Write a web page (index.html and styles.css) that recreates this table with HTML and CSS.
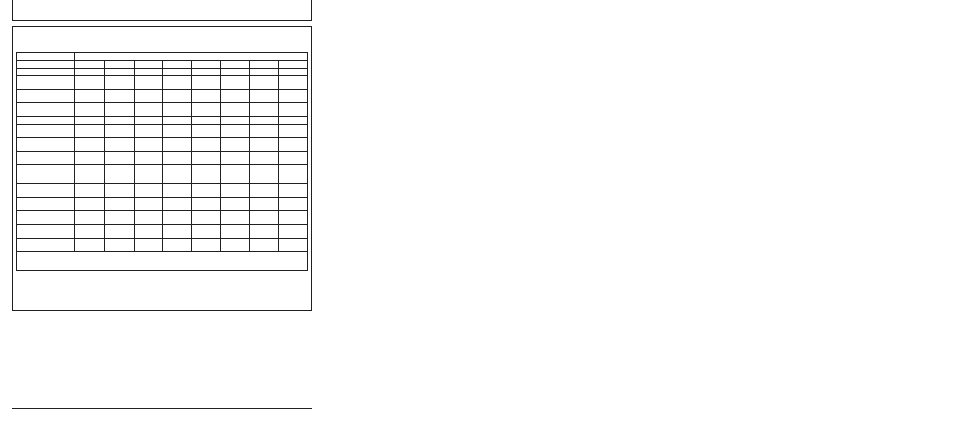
FILE: index.html
```html
<!DOCTYPE html>
<html>
<head>
<meta charset="utf-8">
<link rel="stylesheet" href="styles.css">
</head>
<body>
<div class="page">
  <div class="top-box"></div>
  <div class="panel">
    <div class="grid">
      <div class="c"></div><div class="c span8"></div>
      <div class="c"></div><div class="c"></div><div class="c"></div><div class="c"></div><div class="c"></div><div class="c"></div><div class="c"></div><div class="c"></div><div class="c"></div>
      <div class="c"></div><div class="c"></div><div class="c"></div><div class="c"></div><div class="c"></div><div class="c"></div><div class="c"></div><div class="c"></div><div class="c"></div>
      <div class="c"></div><div class="c"></div><div class="c"></div><div class="c"></div><div class="c"></div><div class="c"></div><div class="c"></div><div class="c"></div><div class="c"></div>
      <div class="c"></div><div class="c"></div><div class="c"></div><div class="c"></div><div class="c"></div><div class="c"></div><div class="c"></div><div class="c"></div><div class="c"></div>
      <div class="c"></div><div class="c"></div><div class="c"></div><div class="c"></div><div class="c"></div><div class="c"></div><div class="c"></div><div class="c"></div><div class="c"></div>
      <div class="c"></div><div class="c"></div><div class="c"></div><div class="c"></div><div class="c"></div><div class="c"></div><div class="c"></div><div class="c"></div><div class="c"></div>
      <div class="c"></div><div class="c"></div><div class="c"></div><div class="c"></div><div class="c"></div><div class="c"></div><div class="c"></div><div class="c"></div><div class="c"></div>
      <div class="c"></div><div class="c"></div><div class="c"></div><div class="c"></div><div class="c"></div><div class="c"></div><div class="c"></div><div class="c"></div><div class="c"></div>
      <div class="c"></div><div class="c"></div><div class="c"></div><div class="c"></div><div class="c"></div><div class="c"></div><div class="c"></div><div class="c"></div><div class="c"></div>
      <div class="c"></div><div class="c"></div><div class="c"></div><div class="c"></div><div class="c"></div><div class="c"></div><div class="c"></div><div class="c"></div><div class="c"></div>
      <div class="c"></div><div class="c"></div><div class="c"></div><div class="c"></div><div class="c"></div><div class="c"></div><div class="c"></div><div class="c"></div><div class="c"></div>
      <div class="c"></div><div class="c"></div><div class="c"></div><div class="c"></div><div class="c"></div><div class="c"></div><div class="c"></div><div class="c"></div><div class="c"></div>
      <div class="c"></div><div class="c"></div><div class="c"></div><div class="c"></div><div class="c"></div><div class="c"></div><div class="c"></div><div class="c"></div><div class="c"></div>
      <div class="c"></div><div class="c"></div><div class="c"></div><div class="c"></div><div class="c"></div><div class="c"></div><div class="c"></div><div class="c"></div><div class="c"></div>
      <div class="c"></div><div class="c"></div><div class="c"></div><div class="c"></div><div class="c"></div><div class="c"></div><div class="c"></div><div class="c"></div><div class="c"></div>
      <div class="c span9"></div>
    </div>
  </div>
  <div class="rule"></div>
</div>
</body>
</html>
```

FILE: styles.css
```css
html, body {
  margin: 0;
  padding: 0;
  background: #ffffff;
  font-family: "Liberation Sans", Arial, sans-serif;
}

.page {
  padding-left: 12px;
  width: 300px;
}

.top-box {
  height: 20px;
  border-left: 1px solid #231f20;
  border-right: 1px solid #231f20;
  border-bottom: 1px solid #231f20;
}

.panel {
  margin-top: 5px;
  border: 1px solid #231f20;
  padding: 25px 3px 39px 3px;
}

.grid {
  display: grid;
  grid-template-columns: 57px 29px 29px 27px 28px 28px 28px 28px 28px;
  grid-template-rows: 7px 7px 6px 13px 12px 13px 7px 12px 13px 12px 18px 13px 12px 13px 13px 12px 18px;
  gap: 1px;
  padding: 1px;
  background: #231f20;
  width: 290px;
}

.c {
  background: #ffffff;
}

.span8 {
  grid-column: span 8;
}

.span9 {
  grid-column: span 9;
}

.rule {
  margin-top: 97px;
  height: 1px;
  background: #231f20;
}
```
